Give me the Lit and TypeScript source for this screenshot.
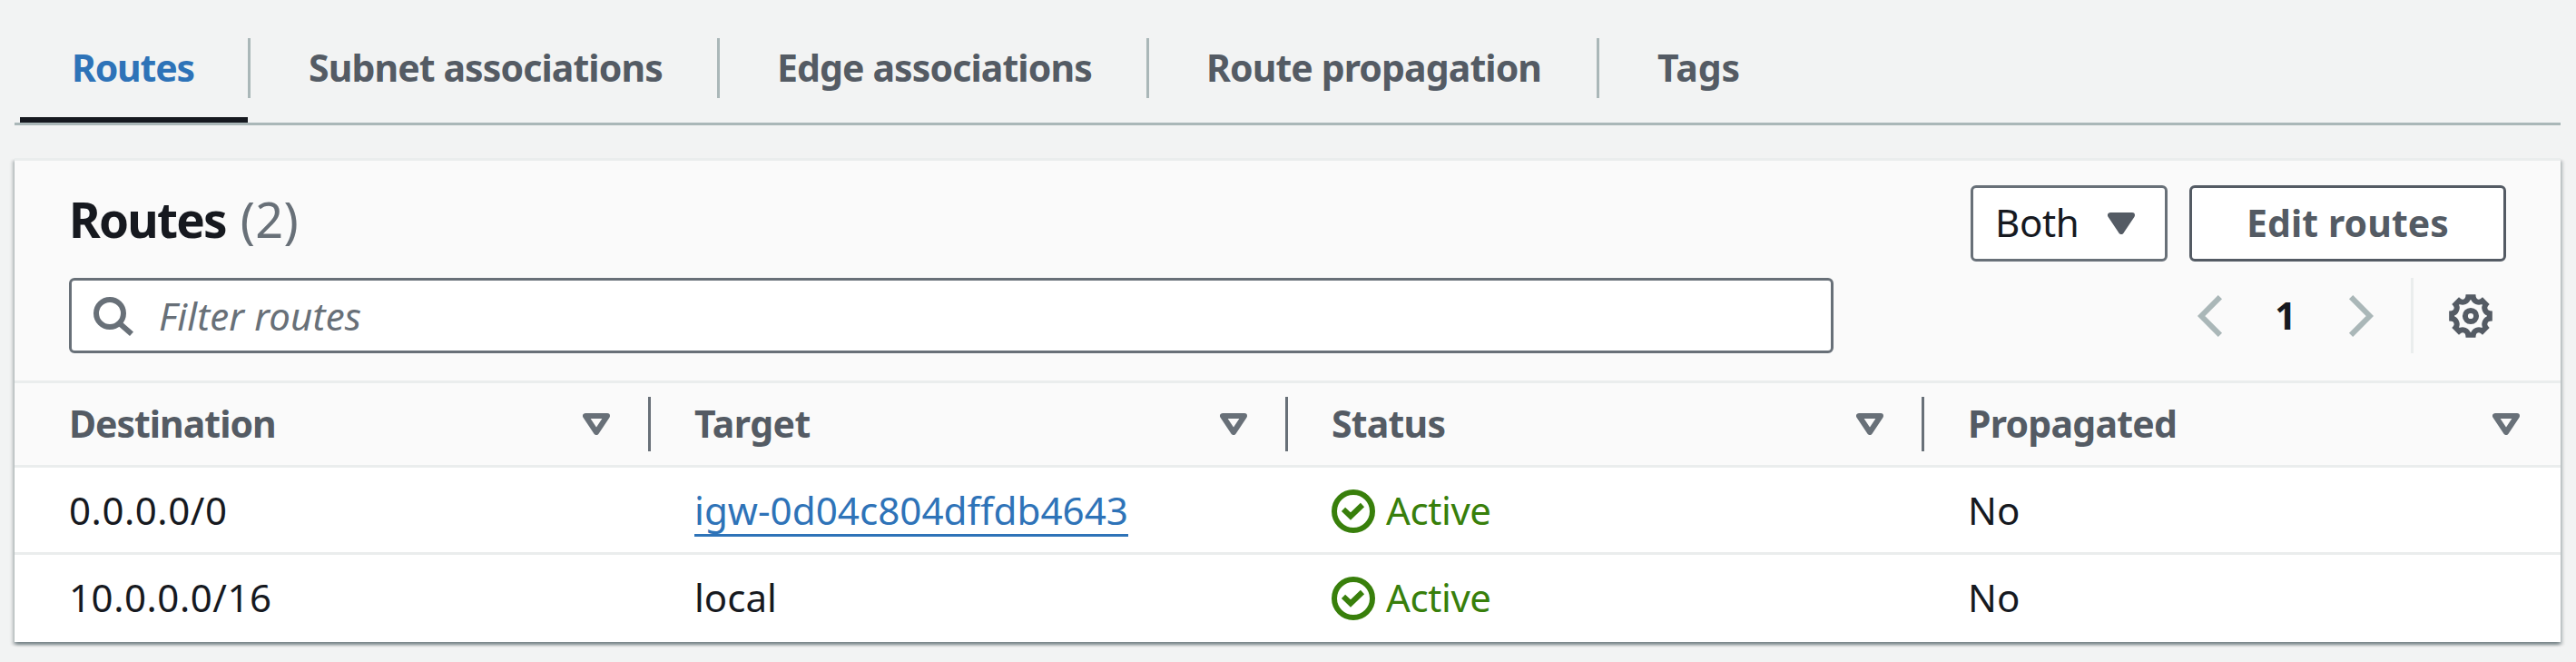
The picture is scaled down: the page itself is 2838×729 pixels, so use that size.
import { LitElement, html, css, svg } from "lit";
import { customElement, state } from "lit/decorators.js";
import { classMap } from "lit/directives/class-map.js";

interface Route {
  destination: string;
  target: string;
  linked: boolean;
  status: string;
  propagated: string;
}

const TABS = [
  { id: "routes", label: "Routes" },
  { id: "subnets", label: "Subnet associations" },
  { id: "edges", label: "Edge associations" },
  { id: "propagation", label: "Route propagation" },
  { id: "tags", label: "Tags" },
];

const COLUMNS = [
  { id: "destination", label: "Destination" },
  { id: "target", label: "Target" },
  { id: "status", label: "Status" },
  { id: "propagated", label: "Propagated" },
];

const ROUTES: Route[] = [
  { destination: "0.0.0.0/0", target: "igw-0d04c804dffdb4643", linked: true, status: "Active", propagated: "No" },
  { destination: "10.0.0.0/16", target: "local", linked: false, status: "Active", propagated: "No" },
];

/* Outline of an eight-toothed gear centred in a 48px box. */
const gearPath = (() => {
  const point = (deg: number) => {
    const a = (deg * Math.PI) / 180;
    return `${(24 + 21 * Math.sin(a)).toFixed(2)} ${(24 - 21 * Math.cos(a)).toFixed(2)}`;
  };
  let d = `M${point(-7.5)}`;
  for (let i = 0; i < 8; i++) {
    d += `L${point(i * 45 + 7.5)}A6.2 6.2 0 0 0 ${point((i + 1) * 45 - 7.5)}`;
  }
  return d + "Z";
})();

const icon = (w: number, h: number, body: unknown) =>
  html`<svg width=${w} height=${h} viewBox="0 0 ${w} ${h}" fill="none" stroke="currentColor" stroke-width="6" aria-hidden="true">${body}</svg>`;

const searchIcon = icon(48, 48, svg`<circle cx="21" cy="21" r="15"/><path d="M31 31.5L45 43.8"/>`);
const prevIcon = icon(48, 48, svg`<path d="M34.9 3.1L14.2 24L34.9 44.9"/>`);
const nextIcon = icon(48, 48, svg`<path d="M13.1 3.1L33.8 24L13.1 44.9"/>`);
const gearIcon = icon(48, 48, svg`<path d=${gearPath}/><circle cx="24" cy="24" r="6.1"/>`);
const checkIcon = icon(48, 48, svg`<circle cx="24" cy="24" r="21"/><path d="M13 21.8L21 29.5L34 17"/>`);
const sortIcon = icon(30, 24, svg`<path d="M3 3H27L15 21Z" stroke-linejoin="round"/>`);
const caretIcon = icon(30, 24, svg`<path d="M3 3H27L15 21Z" stroke-linejoin="round" fill="currentColor"/>`);

@customElement("app-root")
export class AppRoot extends LitElement {
  @state() private activeTab = "routes";
  @state() private page = 1;

  static styles = css`
    :host {
      display: block;
      box-sizing: border-box;
      height: 729px;
      padding: 0 17px 0 16px;
      background: #f2f3f3;
      color: #16191f;
      font: 400 42px/63px "Noto Sans", "Open Sans", sans-serif;
      overflow: hidden;
    }
    * { box-sizing: border-box; }
    svg { display: block; flex: none; }

    .tabs {
      display: flex;
      height: 138px;
      padding: 42px 0 0 6px;
      border-bottom: 3px solid #aab7b8;
    }
    .tab {
      display: flex;
      flex-direction: column;
      justify-content: space-between;
      color: #545b64;
      font-weight: 700;
      font-size: 41px;
      line-height: 65px;
      letter-spacing: -0.9px;
      white-space: nowrap;
    }
    .label {
      height: 66px;
      padding-left: 64px;
      border-right: 3px solid #aab7b8;
    }
    .tab:last-child .label { border-right: 0; }
    .bar { height: 6px; margin-right: 3px; }
    .active { color: #2e73b8; }
    .active .bar { background: #16191f; }
    .tab-routes { width: 254px; letter-spacing: -1.2px; }
    .tab-routes .label { padding-left: 57px; }
    .tab-subnets { width: 517px; }
    .tab-edges { width: 473px; }
    .tab-edges .label, .tab-propagation .label { padding-left: 63px; }
    .tab-propagation { width: 496px; }
    .tab-tags { letter-spacing: -0.1px; }

    .card {
      margin-top: 36px;
      height: 533px;
      border-top: 3px solid #eaeded;
      background: #fff;
      box-shadow: 0 3px 3px 0 rgba(0, 28, 36, 0.3), 3px 3px 3px 0 rgba(0, 28, 36, 0.15),
        -3px 3px 3px 0 rgba(0, 28, 36, 0.15);
    }
    .header {
      display: flex;
      flex-direction: column;
      gap: 18px;
      height: 245px;
      padding: 27px 60px 30px;
      background: #fafafa;
      border-bottom: 3px solid #eaeded;
    }
    .line { display: flex; justify-content: space-between; }
    h2 {
      display: flex;
      align-items: baseline;
      gap: 16px;
      height: 75px;
      margin: 0;
      font: 400 54px/74px "Noto Sans", sans-serif;
    }
    .title { font-size: 53px; line-height: 75px; font-weight: 700; letter-spacing: -1.8px; }
    .count { color: #687078; letter-spacing: 0.3px; }
    .actions { display: flex; gap: 24px; }
    .select, .button {
      display: flex;
      height: 84px;
      padding-top: 6px;
      border: 3px solid #687078;
      border-radius: 6px;
      background: #fff;
    }
    .select {
      width: 217px;
      justify-content: space-between;
      padding-left: 24px;
      padding-right: 33px;
      letter-spacing: -0.4px;
    }
    .caret { margin-top: 21px; color: #545b64; }
    .button {
      width: 349px;
      justify-content: center;
      border-color: #545b64;
      color: #545b64;
      font-weight: 700;
      font-size: 41px;
      line-height: 65px;
      letter-spacing: 0.07px;
    }
    .search {
      display: flex;
      gap: 27px;
      width: 1944px;
      height: 83px;
      padding: 7px 21px;
      border: 3px solid #687078;
      border-radius: 6px;
      background: #fff;
      color: #687078;
    }
    .search svg { margin-top: 8px; }
    .placeholder { font-style: italic; letter-spacing: 0.15px; }
    .pager { display: flex; height: 83px; padding-right: 15px; color: #aab7b8; }
    .pager svg { margin-top: 18px; }
    .page {
      width: 118px;
      padding-top: 9px;
      text-align: center;
      color: #16191f;
      font-weight: 700;
      font-size: 41px;
      line-height: 65px;
    }
    .divider { width: 3px; margin: 0 39px 0 31px; background: #eaeded; }
    .gear { color: #545b64; }

    .row {
      display: grid;
      grid-template-columns: 701px 702px 701px 701px;
      height: 96px;
      border-bottom: 3px solid #eaeded;
    }
    .row:last-child { border-bottom: 0; }
    .head {
      height: 93px;
      background: #fafafa;
      color: #545b64;
      font-weight: 700;
      font-size: 41px;
      letter-spacing: -1px;
    }
    .th {
      display: flex;
      justify-content: space-between;
      height: 60px;
      margin-top: 15px;
      padding: 0 42px 0 48px;
      border-right: 3px solid #687078;
      line-height: 58px;
    }
    .th svg { margin-top: 18px; color: #687078; }
    .th:first-child, .cell:first-child { padding-left: 60px; }
    .th:last-child { border-right-color: transparent; }
    .th-target { letter-spacing: -0.56px; }
    .th-status { letter-spacing: -0.8px; }
    .th-propagated { letter-spacing: -0.75px; }
    .cell { padding: 15px 0 0 48px; }
    .cidr { letter-spacing: 0.55px; }
    .link {
      display: inline-block;
      height: 61px;
      border-bottom: 3px solid #2e73b8;
      color: #2e73b8;
      font-size: 42.2px;
    }
    .status { display: flex; gap: 12px; color: #387f0b; letter-spacing: -0.4px; }
    .status svg { margin-top: 9px; }
  `;

  private renderTarget(r: Route) {
    return r.linked ? html`<span class="link">${r.target}</span>` : r.target;
  }

  render() {
    return html`
      <nav class="tabs">
        ${TABS.map(
          (t) => html`<div
            class=${classMap({ tab: true, [`tab-${t.id}`]: true, active: t.id === this.activeTab })}
            @click=${() => (this.activeTab = t.id)}
          ><div class="label">${t.label}</div><div class="bar"></div></div>`
        )}
      </nav>
      <section class="card">
        <div class="header">
          <div class="line">
            <h2><span class="title">Routes</span><span class="count">(${ROUTES.length})</span></h2>
            <div class="actions">
              <div class="select"><span>Both</span><span class="caret">${caretIcon}</span></div>
              <div class="button">Edit routes</div>
            </div>
          </div>
          <div class="line">
            <div class="search">${searchIcon}<span class="placeholder">Filter routes</span></div>
            <div class="pager">
              ${prevIcon}<span class="page">${this.page}</span>${nextIcon}
              <span class="divider"></span><span class="gear">${gearIcon}</span>
            </div>
          </div>
        </div>
        <div class="row head">
          ${COLUMNS.map((c) => html`<div class="th th-${c.id}"><span>${c.label}</span>${sortIcon}</div>`)}
        </div>
        ${ROUTES.map(
          (r) => html`<div class="row">
            <div class="cell cidr">${r.destination}</div>
            <div class="cell">${this.renderTarget(r)}</div>
            <div class="cell"><div class="status">${checkIcon}<span>${r.status}</span></div></div>
            <div class="cell">${r.propagated}</div>
          </div>`
        )}
      </section>
    `;
  }
}
